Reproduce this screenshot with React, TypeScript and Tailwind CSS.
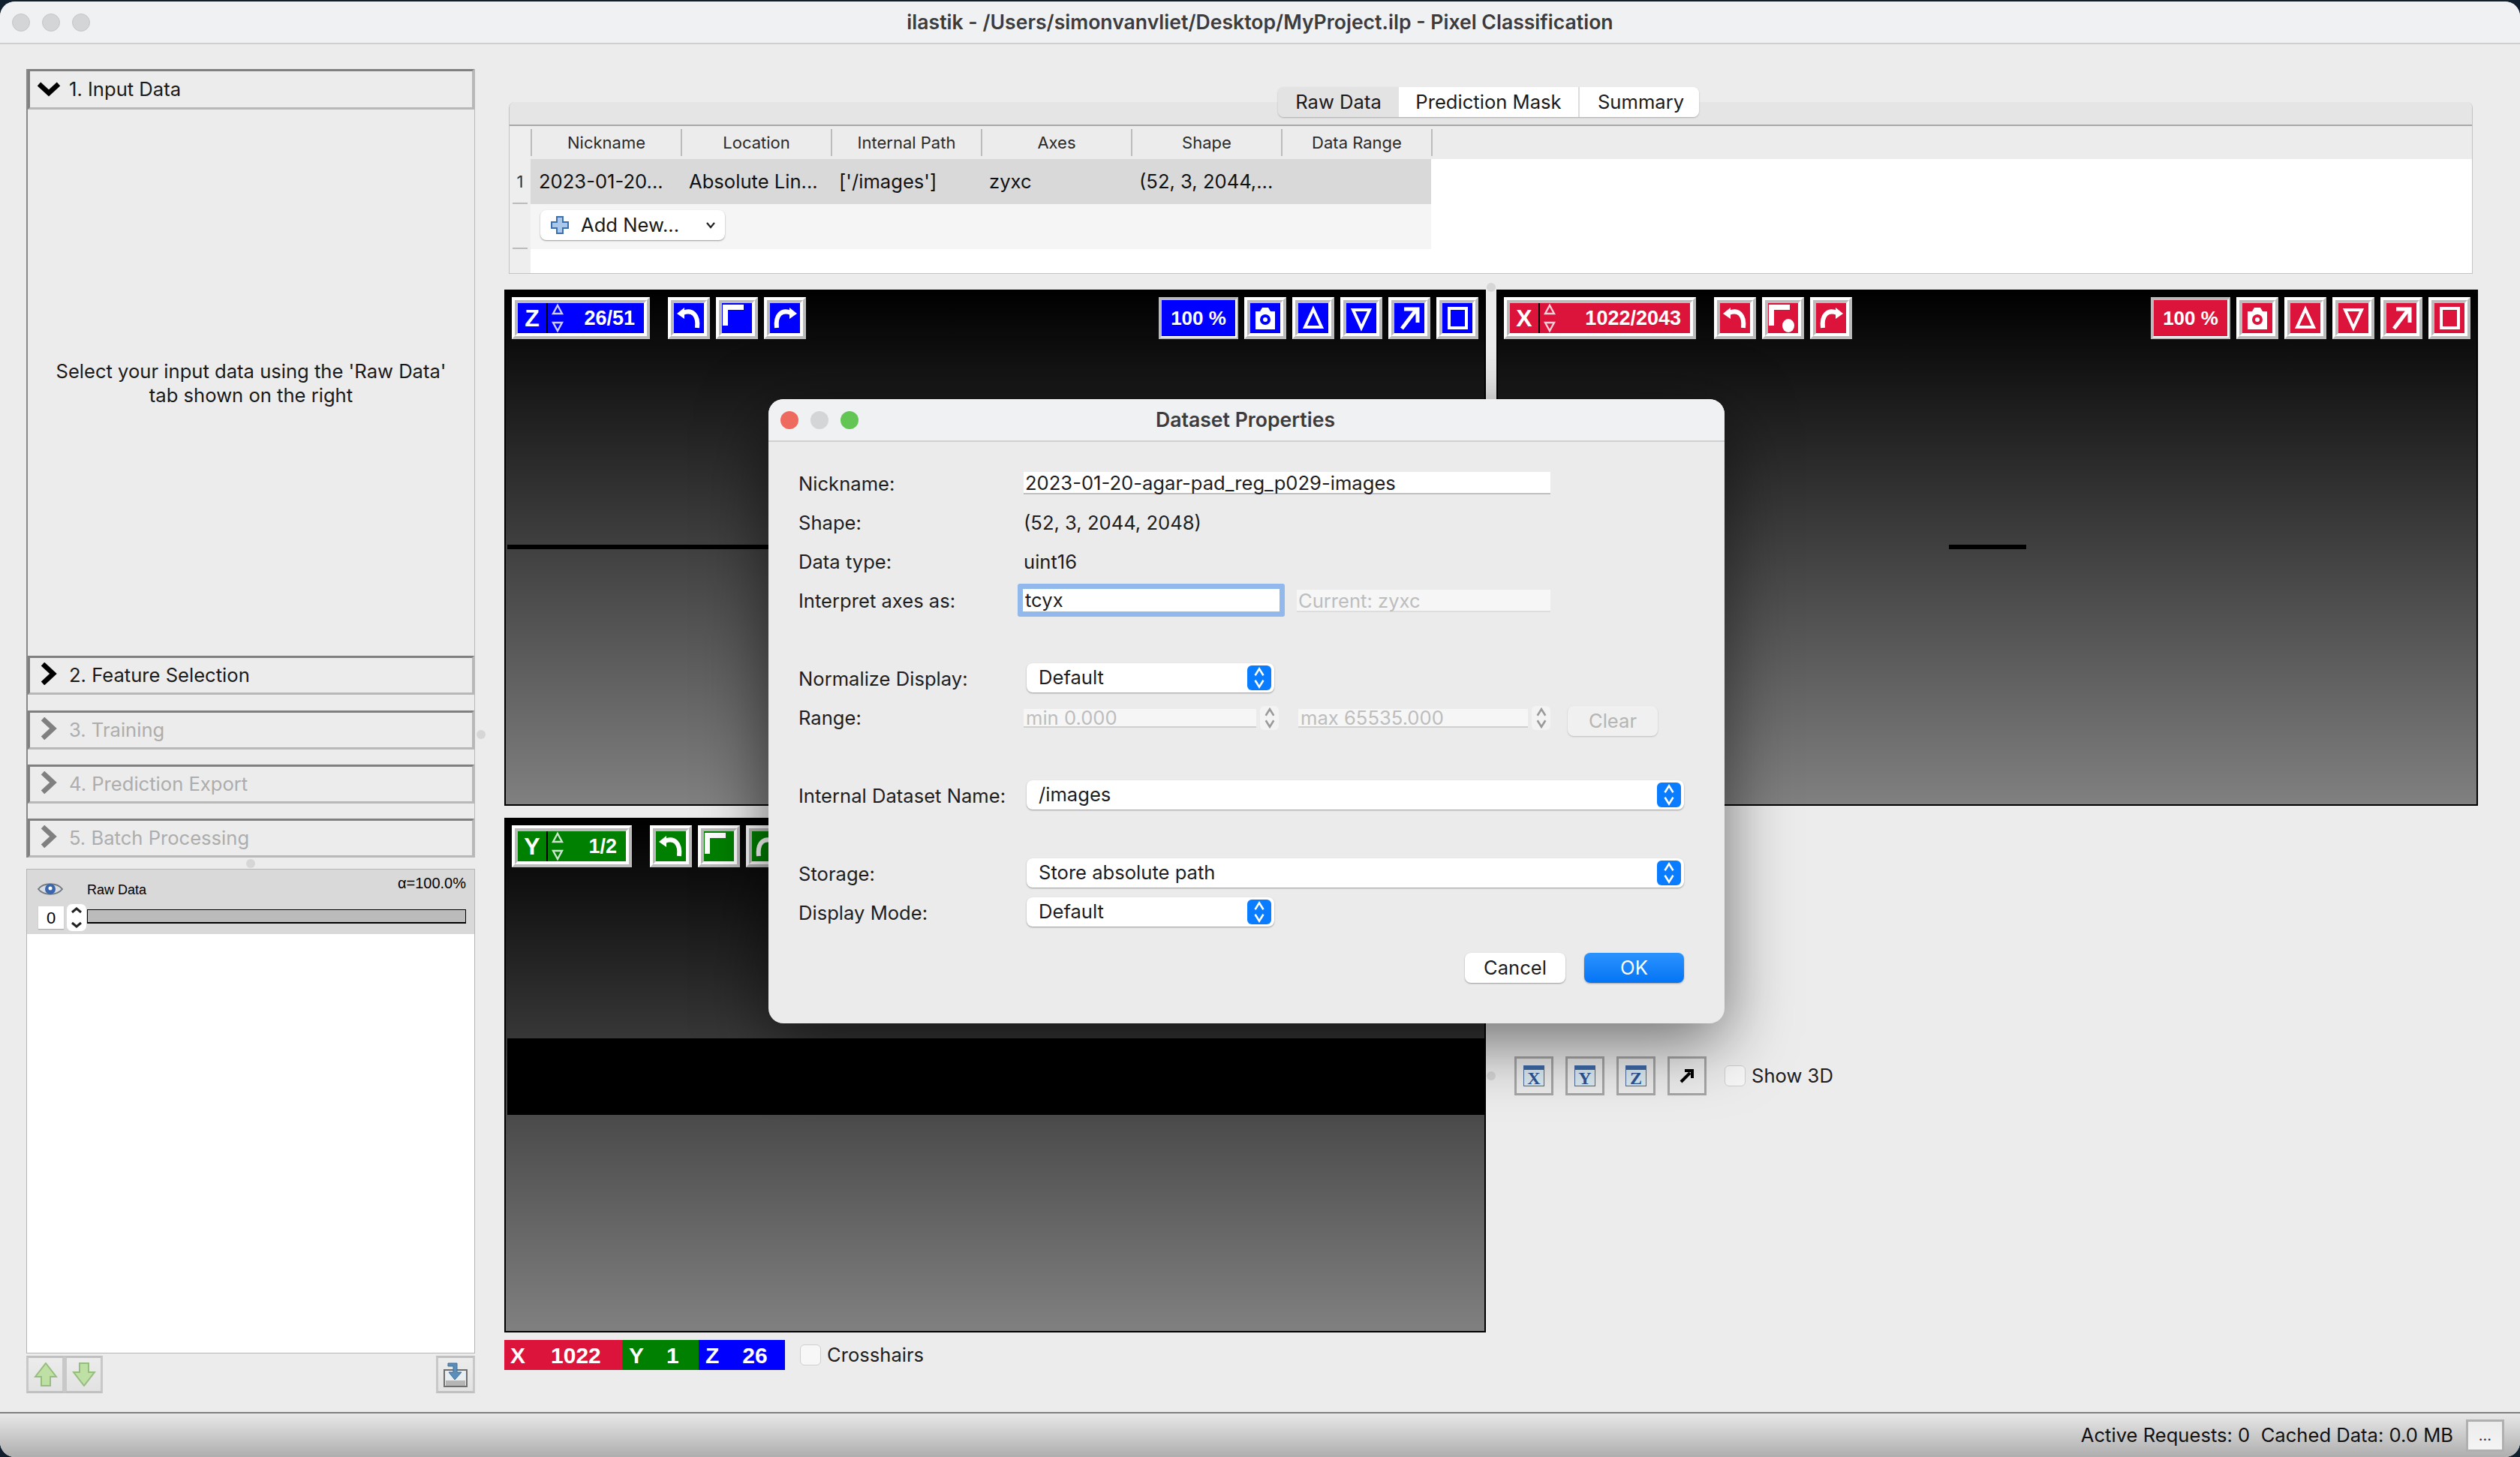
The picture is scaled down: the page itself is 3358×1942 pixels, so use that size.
import type { ReactNode } from 'react';

type Axis = 'x' | 'y' | 'z';

const fills: Record<Axis, string> = {
  x: 'bg-[#dc143c]',
  y: 'bg-[#008000]',
  z: 'bg-[#0000ff]',
};

const strokes: Record<Axis, string> = {
  x: '#dc143c',
  y: '#008000',
  z: '#0000ff',
};

function Bevel({ axis, className, children }: { axis: Axis; className: string; children: ReactNode }) {
  return (
    <div className={`h-[56px] shrink-0 border-4 border-t-white border-l-white border-r-[#bbbbbb] border-b-[#bbbbbb] ${className}`}>
      <div className={`h-full border-4 border-t-[#bbbbbb] border-l-[#bbbbbb] border-r-white border-b-white ${fills[axis]}`}>
        {children}
      </div>
    </div>
  );
}

function ToolIcon({ axis, children }: { axis: Axis; children: ReactNode }) {
  return (
    <Bevel axis={axis} className="w-[56px]">
      <svg viewBox="0 0 40 40" className="w-full h-full">
        {children}
      </svg>
    </Bevel>
  );
}

function RotateLeft() {
  return (
    <>
      <path d="M12 13C24 8 33 15 31 33" fill="none" stroke="white" strokeWidth="6" />
      <path d="M4 14L14 6V21Z" fill="white" />
    </>
  );
}

function RotateRight() {
  return (
    <>
      <path d="M28 13C16 8 7 15 9 33" fill="none" stroke="white" strokeWidth="6" />
      <path d="M36 14L26 6V21Z" fill="white" />
    </>
  );
}

function Swap({ dot }: { dot?: boolean }) {
  return (
    <>
      <path d="M1 2H29V9H8V30H1Z" fill="white" />
      {dot && <ellipse cx="27" cy="30" rx="8" ry="9" fill="white" />}
    </>
  );
}

function AxisBox({ axis, label, slice, width }: { axis: Axis; label: string; slice: string; width: string }) {
  return (
    <Bevel axis={axis} className={width}>
      <div className="h-full flex items-center text-white font-bold font-['Liberation_Sans',sans-serif]">
        <div className="w-[40px] h-full flex items-center justify-center text-[32px] border-r-2 border-r-black">{label}</div>
        <svg viewBox="0 0 16 40" className="w-[16px] h-[40px] ml-[5px]">
          <path d="M8 3L14 14H2Z M2 26H14L8 37Z" fill="none" stroke="white" strokeOpacity="0.8" strokeWidth="2.4" />
        </svg>
        <div className="flex-1 text-right pr-[12px] text-[27px]">{slice}</div>
      </div>
    </Bevel>
  );
}

function ZoomBox({ axis }: { axis: Axis }) {
  return (
    <div className="w-[106px] h-[56px] shrink-0 border-2 border-[#bbbbbb]">
      <div className={`h-full border-2 border-t-[#bbbbbb] border-l-[#bbbbbb] border-r-white border-b-white flex items-center justify-center text-white font-bold text-[26px] font-['Liberation_Sans',sans-serif] ${fills[axis]}`}>
        100 %
      </div>
    </div>
  );
}

function RightTools({ axis }: { axis: Axis }) {
  return (
    <div className="ml-auto flex gap-[8px]">
      <ZoomBox axis={axis} />
      <ToolIcon axis={axis}>
        <path d="M13 11L16 6H24L27 11H33V35H7V11Z" fill="white" />
        <circle cx="20" cy="22" r="7" fill={strokes[axis]} />
        <circle cx="20" cy="22" r="3" fill="white" />
      </ToolIcon>
      <ToolIcon axis={axis}>
        <path d="M20 8L31 32H9Z" fill="none" stroke="white" strokeWidth="4" />
      </ToolIcon>
      <ToolIcon axis={axis}>
        <path d="M9 9H31L20 33Z" fill="none" stroke="white" strokeWidth="4" />
      </ToolIcon>
      <ToolIcon axis={axis}>
        <path d="M10 34L29 9M13 8H31V26" fill="none" stroke="white" strokeWidth="5" />
      </ToolIcon>
      <ToolIcon axis={axis}>
        <rect x="9" y="7" width="23" height="26" fill="none" stroke="white" strokeWidth="4" />
      </ToolIcon>
    </div>
  );
}

function Viewer({
  axis,
  label,
  slice,
  boxWidth,
  height,
  dot,
  rightTools,
  children,
}: {
  axis: Axis;
  label: string;
  slice: string;
  boxWidth: string;
  height: string;
  dot?: boolean;
  rightTools?: boolean;
  children?: ReactNode;
}) {
  return (
    <div className={`relative ${height} border-2 border-black bg-linear-to-b/srgb from-black to-[#808080] p-[8px]`}>
      <div className="flex">
        <AxisBox axis={axis} label={label} slice={slice} width={boxWidth} />
        <div className="flex gap-[8px] ml-[24px]">
          <ToolIcon axis={axis}>
            <RotateLeft />
          </ToolIcon>
          <ToolIcon axis={axis}>
            <Swap dot={dot} />
          </ToolIcon>
          <ToolIcon axis={axis}>
            <RotateRight />
          </ToolIcon>
        </div>
        {rightTools && <RightTools axis={axis} />}
      </div>
      {children}
    </div>
  );
}

function Chevron({ open, muted }: { open?: boolean; muted?: boolean }) {
  const color = muted ? '#808080' : 'black';
  if (open) {
    return (
      <svg viewBox="0 0 32 20" className="w-[32px] h-[20px] absolute left-[9px] top-[14px]">
        <path d="M3 3L16 15L29 3" fill="none" stroke={color} strokeWidth="6.5" />
      </svg>
    );
  }
  return (
    <svg viewBox="0 0 22 30" className="w-[22px] h-[30px] absolute left-[14px] top-[6px]">
      <path d="M3 2L17 15L3 28" fill="none" stroke={color} strokeWidth="6.5" />
    </svg>
  );
}

function StepHeader({ title, open, muted, height }: { title: string; open?: boolean; muted?: boolean; height: string }) {
  return (
    <div
      className={`relative shrink-0 ${height} border-[3px] border-t-[#808080] border-l-[#808080] border-r-[#b8b8b8] border-b-[#b8b8b8] flex items-center pl-[52px] text-[25.6px] ${muted ? 'text-[#adadad]' : 'text-[#1a1a1a]'}`}
    >
      <Chevron open={open} muted={muted} />
      {title}
    </div>
  );
}

function ListButton({ children, className }: { children: ReactNode; className: string }) {
  return (
    <div className={`h-[50px] border-[3px] border-t-[#c0c0c0] border-l-[#c8c8c8] border-r-[#c8c8c8] border-b-[#c0c0c0] bg-linear-to-b/srgb from-[#ececec] to-[#e2e2e2] flex items-center justify-center ${className}`}>
      {children}
    </div>
  );
}

function Sidebar() {
  return (
    <div className="ml-[35px] w-[598px] pt-[33px] shrink-0 flex flex-col">
      <div className="h-[1051px] flex flex-col border-l-2 border-l-[#888888] border-r border-r-[#b8b8b8]">
        <StepHeader title="1. Input Data" open height="h-[54px]" />
        <div className="flex-1 pt-[333px] text-center text-[25.6px] leading-[32px] text-[#1a1a1a]">
          Select your input data using the 'Raw Data'
          <br />
          tab shown on the right
        </div>
        <StepHeader title="2. Feature Selection" height="h-[52px]" />
        <div className="h-[21px] shrink-0" />
        <StepHeader title="3. Training" muted height="h-[52px]" />
        <div className="h-[20px] shrink-0" />
        <StepHeader title="4. Prediction Export" muted height="h-[52px]" />
        <div className="h-[20px] shrink-0" />
        <StepHeader title="5. Batch Processing" muted height="h-[52px]" />
      </div>

      <div className="mt-[15px] h-[646px] flex flex-col border border-[#b5b5b5] bg-white">
        <div className="relative h-[86px] bg-[#d9d9d9] font-['Liberation_Sans',sans-serif] text-black">
          <svg viewBox="0 0 34 20" className="absolute left-[14px] top-[16px] w-[34px] h-[20px]">
            <path d="M1 10C8 1 26 1 33 10C26 19 8 19 1 10Z" fill="#d8dde4" stroke="#75797f" strokeWidth="2" />
            <circle cx="17" cy="10" r="7" fill="#3a66ad" />
            <circle cx="17" cy="9" r="2.5" fill="white" />
          </svg>
          <div className="absolute left-[80px] top-[15px] text-[18px] leading-[24px]">Raw Data</div>
          <div className="absolute right-[11px] top-[7px] text-[20px] leading-[22px]">α=100.0%</div>
          <div className="absolute left-[15px] top-[49px] w-[34px] h-[30px] bg-white text-[22px] flex items-center justify-center shadow-[0_1px_1px_#aaaaaa]">0</div>
          <svg viewBox="0 0 26 36" className="absolute left-[53px] top-[46px] w-[26px] h-[36px]">
            <rect width="26" height="36" rx="7" fill="white" />
            <path d="M7 11L13 6L19 11M7 25L13 30L19 25" fill="none" stroke="#222222" strokeWidth="3" />
          </svg>
          <div className="absolute left-[80px] right-[11px] top-[53px] h-[19px] bg-[#bbbbbb] border border-black border-b-2" />
        </div>
      </div>

      <div className="mt-[3px] flex">
        <ListButton className="w-[51px]">
          <svg viewBox="0 0 32 32" className="w-[32px] h-[32px]">
            <path d="M16 1L30 19H22V31H10V19H2Z" fill="#bfe0a4" stroke="#95bd7d" strokeWidth="2" />
          </svg>
        </ListButton>
        <ListButton className="w-[51px]">
          <svg viewBox="0 0 32 32" className="w-[32px] h-[32px]">
            <path d="M10 1H22V13H30L16 31L2 13H10Z" fill="#bfe0a4" stroke="#95bd7d" strokeWidth="2" />
          </svg>
        </ListButton>
        <ListButton className="w-[52px] ml-auto">
          <svg viewBox="0 0 32 34" className="w-[32px] h-[34px]">
            <rect x="1" y="11" width="30" height="22" fill="#e9eef2" stroke="#6e6e6e" strokeWidth="2" />
            <rect x="3" y="25" width="26" height="7" fill="#b5b5b5" />
            <path d="M6 2H18V14H24L15 24L7 14H13V6H6Z" fill="#5b8fba" stroke="#3e6f99" strokeWidth="1" />
          </svg>
        </ListButton>
      </div>
    </div>
  );
}

function DataTable() {
  const columns = ['Nickname', 'Location', 'Internal Path', 'Axes', 'Shape', 'Data Range'];
  const cells = ['2023-01-20...', 'Absolute Lin...', "['/images']", 'zyxc', '(52, 3, 2044,...', ''];

  return (
    <div className="ml-[6px] w-[2617px]">
      <div className="relative z-10 -mb-[20px] flex justify-center pr-[6px] text-[25.6px] text-[#1a1a1a]">
        <div className="h-[40px] flex rounded-lg overflow-hidden shadow-[0_1px_2px_#aaaaaa]">
          <div className="w-[161px] flex items-center justify-center bg-[#e3e3e3]">Raw Data</div>
          <div className="w-[241px] flex items-center justify-center bg-white border-r-2 border-r-[#dddddd]">Prediction Mask</div>
          <div className="w-[159px] flex items-center justify-center bg-white pl-[4px]">Summary</div>
        </div>
      </div>
      <div className="h-[229px] flex flex-col rounded-t-lg border border-[#c4c4c4] border-t-0 overflow-hidden">
        <div className="h-[32px] shrink-0 bg-[#e5e5e5] border-b-2 border-b-[#a8a8a8]" />
        <div className="flex-1 flex">
          <div className="w-[28px] shrink-0 bg-[#eeeeee] text-[22px] text-[#333333]">
            <div className="h-[44px]" />
            <div className="relative h-[60px] flex items-center justify-center">
              1<div className="absolute bottom-0 left-[4px] w-[20px] h-[2px] bg-[#bbbbbb]" />
            </div>
            <div className="relative h-[60px]">
              <div className="absolute bottom-0 left-[4px] w-[20px] h-[2px] bg-[#bbbbbb]" />
            </div>
          </div>
          <div className="flex-1 bg-white">
            <div className="h-[44px] bg-[#ececec] flex items-center text-[22px] text-[#2a2a2a]">
              {columns.map((c) => (
                <div key={c} className="w-[200px] h-[36px] flex items-center justify-center border-l-2 border-l-[#bcbcbc]">
                  {c}
                </div>
              ))}
              <div className="h-[36px] border-l-2 border-l-[#bcbcbc]" />
            </div>
            <div className="w-[1200px] h-[60px] bg-[#d9d9d9] flex items-center text-[25.6px] text-[#111111]">
              {cells.map((c, i) => (
                <div key={i} className="w-[200px] pl-[11px] whitespace-nowrap">
                  {c}
                </div>
              ))}
            </div>
            <div className="w-[1200px] h-[60px] bg-[#f5f5f5] flex items-center pl-[13px] pb-[4px]">
              <div className="relative w-[246px] h-[40px] rounded-lg bg-white shadow-[0_1px_2px_#999999] flex items-center pl-[54px] text-[25.6px] text-[#1a1a1a]">
                <svg viewBox="0 0 24 24" className="absolute left-[14px] top-[8px] w-[24px] h-[24px]">
                  <path d="M8 1H16V8H23V16H16V23H8V16H1V8H8Z" fill="#a9c8ea" stroke="#3b6fb0" strokeWidth="2" />
                </svg>
                Add New...
                <svg viewBox="0 0 12 12" className="absolute right-[13px] top-[14px] w-[12px] h-[12px]">
                  <path d="M1 3L6 9L11 3" fill="none" stroke="#222222" strokeWidth="2.2" />
                </svg>
              </div>
            </div>
          </div>
        </div>
      </div>
    </div>
  );
}

function WindowIcon({ letter }: { letter: string }) {
  return (
    <div className="w-[52px] h-[52px] border-[3px] border-[#a6a6a6] flex items-center justify-center">
      <div className="relative w-[28px] h-[28px] bg-[#dbeaf2] border border-[#4c6a9a] border-t-[6px] border-t-[#3f69a8] flex items-center justify-center overflow-hidden">
        <span className="text-[24px] leading-[22px] font-bold text-[#2f5597] font-['Liberation_Serif',serif]">{letter}</span>
      </div>
    </div>
  );
}

function Checkbox() {
  return <div className="w-[28px] h-[28px] rounded-md bg-[#f7f7f7] border border-[#cfcfcf] shrink-0" />;
}

function Chevrons({ color, size }: { color: string; size: string }) {
  return (
    <svg viewBox="0 0 16 30" className={size}>
      <path d="M3 12L8 4L13 12M3 18L8 26L13 18" fill="none" stroke={color} strokeWidth="2.4" />
    </svg>
  );
}

function Combo({ value, width }: { value: string; width: string }) {
  return (
    <div className={`ml-[4px] mb-[3px] h-[39px] ${width} rounded-lg bg-white shadow-[0_1px_2px_#999999] flex items-center justify-between pl-[16px] pr-[4px]`}>
      {value}
      <div className="w-[32px] h-[33px] rounded-md bg-[#0a7cff] flex items-center justify-center">
        <Chevrons color="white" size="w-[18px] h-[33px]" />
      </div>
    </div>
  );
}

function DialogRow({ label, children, className }: { label: string; children: ReactNode; className?: string }) {
  return (
    <div className={`h-[52px] flex items-center ${className ?? ''}`}>
      <div className="w-[300px] shrink-0 whitespace-nowrap">{label}</div>
      {children}
    </div>
  );
}

function RangeInput({ value, width }: { value: string; width: string }) {
  return (
    <div className={`h-[25px] ${width} bg-[#f6f6f6] border-b-2 border-b-[#d0d0d0] pl-[3px] flex items-center text-[#bdbdbd] leading-[25px]`}>
      {value}
    </div>
  );
}

function RangeArrows() {
  return (
    <div className="w-[25px] h-[32px] ml-[5px] rounded-md bg-[#f3f3f3] flex items-center justify-center">
      <Chevrons color="#9a9a9a" size="w-[18px] h-[32px]" />
    </div>
  );
}

function Dialog() {
  return (
    <div className="absolute left-[1024px] top-[530px] w-[1274px] h-[832px] rounded-[20px] bg-[#ebebeb] shadow-[0_24px_90px_rgba(0,0,0,0.55)] text-[25.6px] text-[#1d1d1f] overflow-hidden">
      <div className="relative h-[57px] bg-[#f0f1f3] border-b-2 border-b-[#d0d0d0] flex items-center justify-center pr-[3px] font-semibold text-[26.6px] text-[#3c3c3e]">
        <div className="absolute left-[16px] top-[16px] flex gap-[16px]">
          <div className="w-[24px] h-[24px] rounded-full bg-[#ee6a5f]" />
          <div className="w-[24px] h-[24px] rounded-full bg-[#d4d5d6]" />
          <div className="w-[24px] h-[24px] rounded-full bg-[#62c554]" />
        </div>
        Dataset Properties
      </div>

      <div className="px-[40px] pt-[30px]">
        <DialogRow label="Nickname:">
          <div className="w-[702px] h-[30px] bg-white border-b-2 border-b-[#c0c0c0] pl-[2px] leading-[29px] mb-[2px]">2023-01-20-agar-pad_reg_p029-images</div>
        </DialogRow>
        <DialogRow label="Shape:">(52, 3, 2044, 2048)</DialogRow>
        <DialogRow label="Data type:">uint16</DialogRow>
        <DialogRow label="Interpret axes as:">
          <div className="-ml-[8px] w-[356px] h-[44px] rounded-[3px] border-[7px] border-[#91b9ec] bg-white leading-[30px] pl-[3px] mb-[2px]">tcyx</div>
          <div className="ml-[16px] w-[338px] h-[30px] bg-[#f6f6f6] border-b-2 border-b-[#dddddd] pl-[2px] leading-[29px] text-[#bdbdbd]">Current: zyxc</div>
        </DialogRow>

        <DialogRow label="Normalize Display:" className="mt-[52px]">
          <Combo value="Default" width="w-[330px]" />
        </DialogRow>
        <DialogRow label="Range:">
          <RangeInput value="min 0.000" width="w-[310px]" />
          <RangeArrows />
          <div className="ml-[26px]" />
          <RangeInput value="max 65535.000" width="w-[306px]" />
          <RangeArrows />
          <div className="ml-[23px] w-[120px] h-[40px] rounded-lg bg-[#f0f0f0] shadow-[0_1px_2px_#bbbbbb] flex items-center justify-center text-[#b5b5b5] mt-[8px]">Clear</div>
        </DialogRow>

        <DialogRow label="Internal Dataset Name:" className="mt-[52px]">
          <Combo value="/images" width="w-[876px]" />
        </DialogRow>
        <DialogRow label="Storage:" className="mt-[52px]">
          <Combo value="Store absolute path" width="w-[876px]" />
        </DialogRow>
        <DialogRow label="Display Mode:">
          <Combo value="Default" width="w-[330px]" />
        </DialogRow>

        <div className="mt-[27px] flex justify-end gap-[25px] pr-[14px]">
          <div className="w-[134px] h-[40px] rounded-lg bg-white shadow-[0_1px_2px_#999999] flex items-center justify-center">Cancel</div>
          <div className="w-[133px] h-[40px] rounded-lg bg-linear-to-b/srgb from-[#2b93ff] to-[#0474f5] shadow-[0_1px_2px_#999999] flex items-center justify-center text-white">OK</div>
        </div>
      </div>
    </div>
  );
}

function Dot({ className }: { className: string }) {
  return <div className={`absolute w-[12px] h-[12px] rounded-full bg-[#d6d6d6] ${className}`} />;
}

export default function App() {
  return (
    <div className="w-[3358px] h-[1942px] bg-[#10202f] pt-[2px] overflow-hidden font-['Inter',sans-serif]">
      <div className="relative h-[1940px] rounded-[20px] overflow-hidden bg-[#ececec] flex flex-col">
        {/* Title bar */}
        <div className="relative h-[57px] shrink-0 bg-[#f0f1f3] border-b-2 border-b-[#cfcfcf] flex items-center justify-center text-[26.6px] font-semibold text-[#3c3c3e]">
          <div className="absolute left-[16px] top-[16px] flex gap-[16px]">
            <div className="w-[24px] h-[24px] rounded-full bg-[#d4d5d6] border border-[#c4c5c6]" />
            <div className="w-[24px] h-[24px] rounded-full bg-[#d4d5d6] border border-[#c4c5c6]" />
            <div className="w-[24px] h-[24px] rounded-full bg-[#d4d5d6] border border-[#c4c5c6]" />
          </div>
          ilastik - /Users/simonvanvliet/Desktop/MyProject.ilp - Pixel Classification
        </div>

        {/* Main area */}
        <div className="flex-1 flex">
          <Sidebar />

          <div className="ml-[39px] w-[2630px] pt-[57px]">
            <DataTable />

            <div className="mt-[21px] grid grid-cols-[1308px_1308px] gap-x-[14px] gap-y-[16px]">
              <Viewer axis="z" label="Z" slice="26/51" boxWidth="w-[184px]" height="h-[688px]" rightTools>
                <div className="absolute left-[2px] top-[338px] w-[1300px] h-[6px] bg-black" />
              </Viewer>
              <Viewer axis="x" label="X" slice="1022/2043" boxWidth="w-[256px]" height="h-[688px]" dot rightTools>
                <div className="absolute left-[601px] top-[338px] w-[103px] h-[6px] bg-black" />
              </Viewer>
              <Viewer axis="y" label="Y" slice="1/2" boxWidth="w-[160px]" height="h-[686px]">
                <div className="absolute left-[2px] right-0 top-[292px] h-[102px] bg-black" />
              </Viewer>
              <div className="flex items-start gap-[16px] pl-[24px] pt-[318px] text-[25.6px] text-[#1d1d1f]">
                <WindowIcon letter="X" />
                <WindowIcon letter="Y" />
                <WindowIcon letter="Z" />
                <div className="w-[52px] h-[52px] border-[3px] border-[#a6a6a6] flex items-center justify-center">
                  <svg viewBox="0 0 20 20" className="w-[20px] h-[20px]">
                    <path d="M2 18L14 6M7 3H17V13" fill="none" stroke="black" strokeWidth="4" />
                  </svg>
                </div>
                <div className="ml-[8px] h-[52px] flex items-center gap-[8px]">
                  <Checkbox />
                  Show 3D
                </div>
              </div>
            </div>

            <div className="mt-[10px] flex items-center">
              <div className="h-[40px] flex text-white font-bold text-[30px] font-['Liberation_Sans',sans-serif]">
                <div className={`w-[157px] flex items-center pl-[8px] gap-[34px] ${fills.x}`}>
                  <span>X</span>
                  <span>1022</span>
                </div>
                <div className={`w-[102px] flex items-center pl-[9px] gap-[30px] ${fills.y}`}>
                  <span>Y</span>
                  <span>1</span>
                </div>
                <div className={`w-[115px] flex items-center pl-[9px] gap-[31px] ${fills.z}`}>
                  <span>Z</span>
                  <span>26</span>
                </div>
              </div>
              <div className="ml-[20px] flex items-center gap-[8px] text-[25.6px] text-[#1d1d1f]">
                <Checkbox />
                Crosshairs
              </div>
            </div>
          </div>
        </div>

        {/* Status bar */}
        <div className="h-[60px] shrink-0 border-t-2 border-t-[#808080] bg-linear-to-b/srgb from-[#e8e8e8] to-[#aeaeae] flex items-center justify-end pr-[21px] text-[25.6px] text-[#111111]">
          Active Requests: 0&nbsp;&nbsp;Cached Data: 0.0 MB
          <div className="ml-[17px] w-[51px] h-[43px] border-[3px] border-[#b0b0b0] bg-linear-to-b/srgb from-[#ececec] to-[#f4f4f4] flex items-center justify-center text-[20px] text-[#333333]">...</div>
        </div>

        <Dot className="left-[635px] top-[971px]" />
        <Dot className="left-[328px] top-[1143px]" />
        <Dot className="left-[1981px] top-[375px]" />
        <Dot className="left-[1981px] top-[1426px]" />

        <Dialog />
      </div>
    </div>
  );
}
